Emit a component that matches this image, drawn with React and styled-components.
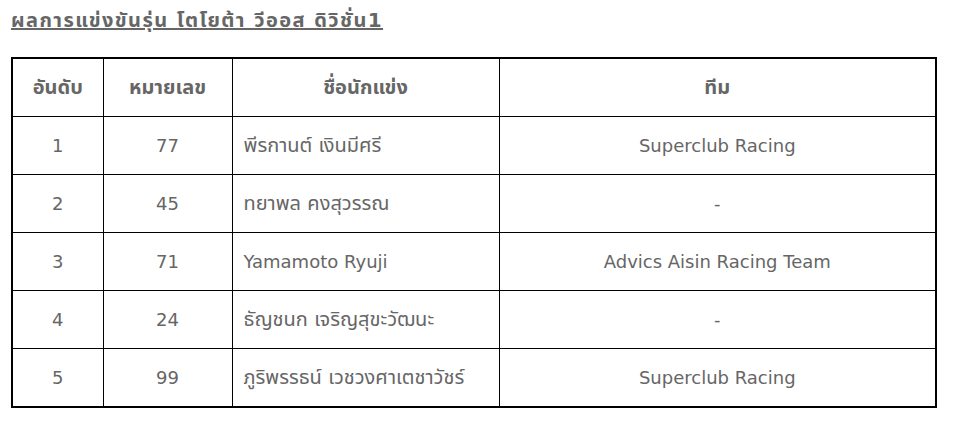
import styled, { createGlobalStyle } from 'styled-components'

const Global = createGlobalStyle`
  html, body { margin: 0; padding: 0; background: #fff; }
  body { font-family: "DejaVu Sans", "Noto Sans", "Noto Sans Thai", sans-serif; color: #666; }
`

const Page = styled.div`
  padding: 9px 0 0 11px;
`

const Title = styled.h3`
  margin: 0 0 26px 0;
  font-size: 20px;
  font-weight: bold;
  letter-spacing: 1.4px;
  text-decoration: underline;
  color: #666;
  line-height: 22px;
`

const Table = styled.table`
  border-collapse: collapse;
  width: 924px;
  table-layout: fixed;
  border: 2px solid #000;
`

const Col = styled.col`
  width: ${p => p.w}px;
`

const Th = styled.th`
  height: 57px;
  border: 1px solid #000;
  font-size: 20px;
  font-weight: bold;
  color: #666;
  text-align: center;
  padding: 0;
`

const Td = styled.td`
  height: 57px;
  border: 1px solid #000;
  font-size: ${p => p.thai ? 20 : 18}px;
  color: #666;
  text-align: ${p => p.left ? 'left' : 'center'};
  padding: ${p => p.left ? '0 0 0 11px' : '0'};
`

const rows = [
  ['1', '77', 'พีรกานต์ เงินมีศรี', 'Superclub Racing'],
  ['2', '45', 'ทยาพล คงสุวรรณ', '-'],
  ['3', '71', 'Yamamoto Ryuji', 'Advics Aisin Racing Team'],
  ['4', '24', 'ธัญชนก เจริญสุขะวัฒนะ', '-'],
  ['5', '99', 'ภูริพรรธน์ เวชวงศาเตชาวัชร์', 'Superclub Racing'],
]

const isThai = s => /[\u0E00-\u0E7F]/.test(s)

export default function App() {
  return (
    <Page>
      <Global />
      <Title>ผลการแข่งขันรุ่น โตโยต้า วีออส ดิวิชั่น1</Title>
      <Table>
        <colgroup>
          <Col w={91} />
          <Col w={129} />
          <Col w={267} />
          <Col w={437} />
        </colgroup>
        <thead>
          <tr>
            <Th>อันดับ</Th>
            <Th>หมายเลข</Th>
            <Th>ชื่อนักแข่ง</Th>
            <Th>ทีม</Th>
          </tr>
        </thead>
        <tbody>
          {rows.map((r, i) => (
            <tr key={i}>
              <Td>{r[0]}</Td>
              <Td>{r[1]}</Td>
              <Td left thai={isThai(r[2])}>{r[2]}</Td>
              <Td>{r[3]}</Td>
            </tr>
          ))}
        </tbody>
      </Table>
    </Page>
  )
}
